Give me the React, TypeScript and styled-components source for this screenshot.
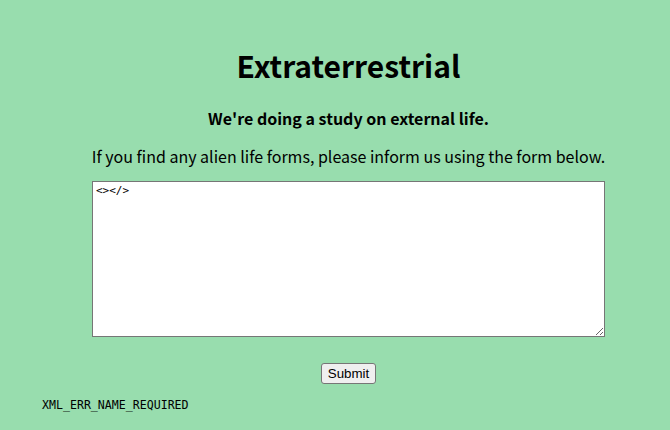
import styled, { createGlobalStyle } from "styled-components";

const GlobalStyle = createGlobalStyle`
  html, body {
    margin: 0;
    padding: 0;
    background: #98ddae;
  }
  body {
    font-family: "Noto Sans CJK KR", "Noto Sans", sans-serif;
    color: #000;
  }
`;

const App = () => {
  return (
    <>
      <GlobalStyle />
      <Page>
        <Main>
          <Title>Extraterrestrial</Title>
          <Subtitle>We're doing a study on external life.</Subtitle>
          <Intro>If you find any alien life forms, please inform us using the form below.</Intro>
          <Form onSubmit={(e) => e.preventDefault()}>
            <Report defaultValue="<></>" />
            <SubmitButton type="submit">Submit</SubmitButton>
          </Form>
        </Main>
        <ErrorText>XML_ERR_NAME_REQUIRED</ErrorText>
      </Page>
    </>
  );
};

const Page = styled.div`
  width: 670px;
  height: 430px;
  background: #98ddae;
  overflow: hidden;
`;

const Main = styled.div`
  display: flex;
  flex-direction: column;
  align-items: center;
  padding-left: 27px;
  padding-top: 42px;
`;

const Title = styled.h1`
  margin: 0;
  font-size: 30px;
  font-weight: 700;
  line-height: 47px;
`;

const Subtitle = styled.h4`
  margin: 17px 0 0;
  font-size: 16px;
  font-weight: 700;
  line-height: 24px;
`;

const Intro = styled.p`
  margin: 14px 0 0;
  font-size: 16px;
  line-height: 24px;
`;

const Form = styled.form`
  display: flex;
  flex-direction: column;
  align-items: center;
  margin-top: 13px;
`;

const Report = styled.textarea`
  box-sizing: border-box;
  width: 513px;
  height: 156px;
  margin: 0;
  padding: 2px 3px;
  border: 1px solid #767676;
  border-radius: 0;
  background: #fff;
  font-family: "DejaVu Sans Mono", monospace;
  font-size: 11px;
  line-height: 14px;
`;

const SubmitButton = styled.button`
  margin-top: 26px;
  height: 21px;
  padding: 0 6px;
  font-family: "Liberation Sans", Arial, sans-serif;
  font-size: 13.33px;
  color: #000;
  background: #efefef;
  border: 1px solid #767676;
  border-radius: 3px;
`;

const ErrorText = styled.div`
  margin: 14px 0 0 42px;
  font-family: "DejaVu Sans Mono", monospace;
  font-size: 11.6px;
  line-height: 14px;
  letter-spacing: 0;
`;

export default App;
